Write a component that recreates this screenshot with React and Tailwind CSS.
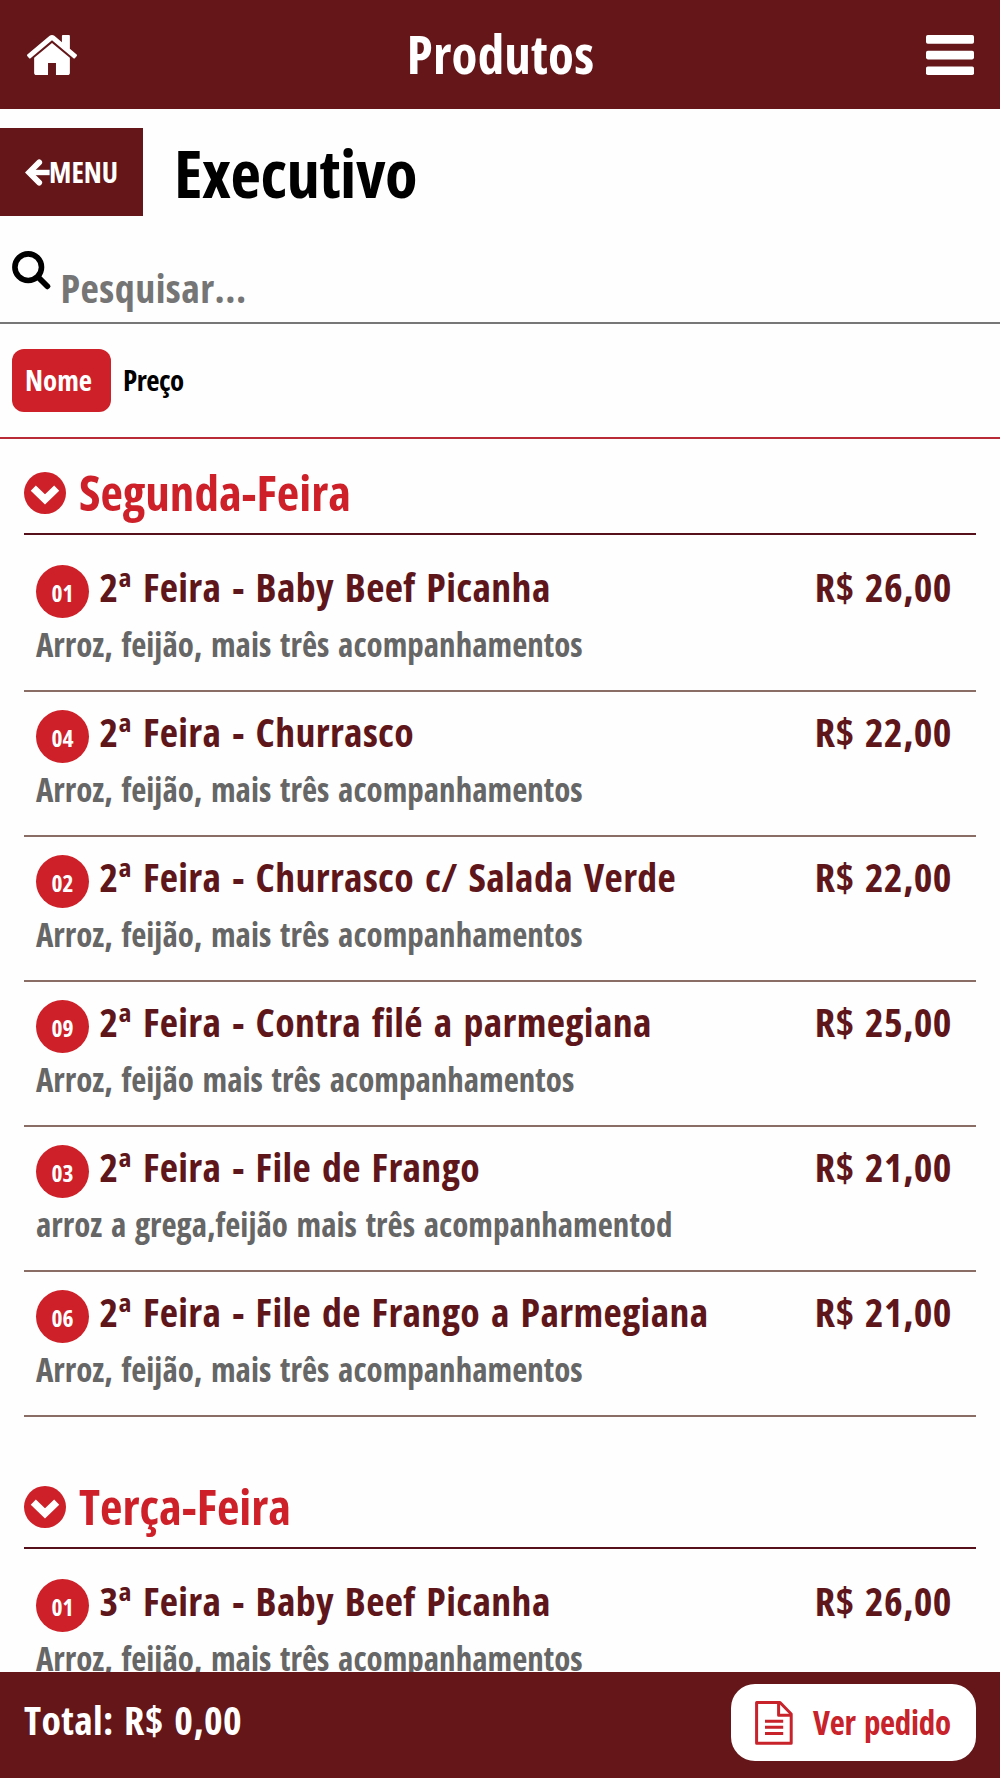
import React from 'react';

const rice = 'Arroz, feijão, mais três acompanhamentos';

const sections = [
  {
    title: 'Segunda-Feira',
    items: [
      { code: '01', name: '2ª Feira - Baby Beef Picanha', price: 'R$ 26,00', desc: rice },
      { code: '04', name: '2ª Feira - Churrasco', price: 'R$ 22,00', desc: rice },
      { code: '02', name: '2ª Feira - Churrasco c/ Salada Verde', price: 'R$ 22,00', desc: rice },
      { code: '09', name: '2ª Feira - Contra filé a parmegiana', price: 'R$ 25,00', desc: 'Arroz, feijão mais três acompanhamentos' },
      { code: '03', name: '2ª Feira - File de Frango', price: 'R$ 21,00', desc: 'arroz a grega,feijão mais três acompanhamentod' },
      { code: '06', name: '2ª Feira - File de Frango a Parmegiana', price: 'R$ 21,00', desc: rice },
    ],
  },
  {
    title: 'Terça-Feira',
    items: [{ code: '01', name: '3ª Feira - Baby Beef Picanha', price: 'R$ 26,00', desc: rice }],
  },
];

function HomeIcon() {
  return (
    <svg className="h-10 w-[50px]" viewBox="26 253 1612 1283" preserveAspectRatio="none" fill="currentColor">
      <path d="M1408 992v480q0 26-19 45t-45 19H960v-384H704v384H320q-26 0-45-19t-19-45V992q0-1 .5-3t.5-3l575-474 575 474q1 2 1 6zm223-69l-62 74q-8 9-21 11h-3q-13 0-21-7L832 424l-692 577q-12 8-24 7-13-2-21-11l-62-74q-8-10-7-23.5T37 878l719-599q32-26 76-26t76 26l244 204V288q0-14 9-23t23-9h192q14 0 23 9t9 23v408l219 182q10 8 11 21.5t-7 23.5z" />
    </svg>
  );
}

function BarsIcon() {
  return (
    <svg className="h-10 w-12" viewBox="0 0 48 40" fill="currentColor">
      <rect y="0" width="48" height="8.8" rx="1.8" />
      <rect y="15.8" width="48" height="8.6" rx="1.8" />
      <rect y="31.4" width="48" height="8.6" rx="1.8" />
    </svg>
  );
}

function ArrowIcon() {
  return (
    <svg className="h-[27px] w-[25px] shrink-0" viewBox="0 0 25 27" fill="none" stroke="currentColor">
      <path d="M14.2 3.4L4 13.5L14.2 23.6" strokeWidth="5.8" strokeLinecap="round" />
      <path d="M4 13.5H24.6" strokeWidth="5.4" />
    </svg>
  );
}

function SearchIcon() {
  return (
    <svg className="h-[39px] w-[39px] shrink-0" viewBox="0 0 39 39" fill="none" stroke="currentColor">
      <circle cx="16.2" cy="16.2" r="13.3" strokeWidth="5.6" />
      <path d="M26.5 26.5L35.3 35.3" strokeWidth="5.8" strokeLinecap="round" />
    </svg>
  );
}

function ChevronCircle() {
  return (
    <svg className="h-[42px] w-[42px] shrink-0" viewBox="0 0 42 42">
      <circle cx="21" cy="21" r="21" fill="#cd2028" />
      <path d="M9.3 16.2L21 27.4L32.7 16.2" fill="none" stroke="#fff" strokeWidth="7.4" strokeLinejoin="miter" />
    </svg>
  );
}

function DocIcon() {
  return (
    <svg className="mt-px h-11 w-[38px] shrink-0" viewBox="0 0 38 44" fill="none" stroke="currentColor" strokeWidth="3" strokeLinejoin="round">
      <path d="M1.6 1.5H25L36.2 13V42.3H1.6Z" />
      <path d="M23.6 1.5V14.3H36.2" />
      <path d="M10 20.3H28.2M10 26.3H28.2M10 32.4H28.2" />
    </svg>
  );
}

function Item({ code, name, price, desc }) {
  return (
    <li className="h-[145px] border-b-2 border-[#8a6e66] pt-[17px] pr-6 pl-3">
      <div className="flex h-[54px] items-start">
        <span className="mt-[0.5px] flex h-[53px] w-[53px] shrink-0 items-center justify-center rounded-full bg-[#cd2028] pt-[5px] text-[23.5px] leading-none text-white">
          {code}
        </span>
        <span className="ml-[10.5px] text-[39.8px] leading-[46px] tracking-[0.35px] text-[#5f161b] [word-spacing:3.4px]">{name}</span>
        <span className="ml-auto text-[39.8px] leading-[46px] tracking-[0.45px] text-[#5f161b] [word-spacing:2.6px]">{price}</span>
      </div>
      <p className="text-[33px] leading-[54px] text-[#666] [word-spacing:2.8px]">{desc}</p>
    </li>
  );
}

export default function App() {
  return (
    <div className="flex h-[1778px] w-[1000px] flex-col overflow-hidden bg-[#fefefe] font-['Open_Sans','Noto_Sans',sans-serif] font-bold whitespace-nowrap text-black [font-stretch:75%]">
      <header className="grid h-[109px] shrink-0 grid-cols-3 items-center bg-[#641619] pt-px pr-[26px] pl-[27px] text-white">
        <HomeIcon />
        <h1 className="-mt-1 text-center text-[53px] leading-none tracking-[0.2px]">Produtos</h1>
        <div className="flex justify-end">
          <BarsIcon />
        </div>
      </header>

      <div className="mt-[19px] flex h-[88px] shrink-0 items-center">
        <button className="flex h-full w-[142.5px] items-center bg-[#641619] pl-[25px] text-[29px] leading-none text-white">
          <ArrowIcon />
          <span className="-mt-0.5 -ml-px">MENU</span>
        </button>
        <h2 className="mt-0.5 ml-[31.5px] text-[66.7px] leading-none tracking-[-0.5px]">Executivo</h2>
      </div>

      <div className="flex h-[108px] shrink-0 items-start border-b-2 border-[#777] pt-[35px] pl-3">
        <SearchIcon />
        <input
          placeholder="Pesquisar..."
          className="mt-[11px] ml-[9.5px] h-[52px] flex-1 text-[40px] leading-[52px] tracking-[0.45px] outline-none placeholder:text-[#757575] placeholder:opacity-100"
        />
      </div>

      <div className="flex h-[115px] shrink-0 items-start border-b-2 border-[#b92c37] pt-[25px] pl-3 text-[29px]">
        <span className="h-[63px] w-[99px] rounded-[12px] bg-[#cd2028] pl-[13px] leading-[62px] text-white">Nome</span>
        <span className="pl-3 leading-[62px] tracking-[-0.5px]">Preço</span>
      </div>

      <main className="min-h-0 flex-1 overflow-hidden px-6">
        {sections.map((s) => (
          <section key={s.title} className="mb-[36px]">
            <h3 className="flex h-[96px] items-center gap-[13px] border-b-2 border-[#561019] pt-[14px] text-[49px] leading-[60px] text-[#cd2028]">
              <ChevronCircle />
              <span className="-mt-0.5">{s.title}</span>
            </h3>
            <ul className="pt-3">
              {s.items.map((it) => (
                <Item key={it.code} {...it} />
              ))}
            </ul>
          </section>
        ))}
      </main>

      <footer className="flex h-[106px] shrink-0 items-start justify-between bg-[#641619] px-6 pt-3 text-white">
        <span className="text-[39.8px] leading-[72px] tracking-[0.35px] [word-spacing:3px]">Total: R$ 0,00</span>
        <button className="flex h-[77px] w-[245px] items-center rounded-[24px] bg-white pl-6 text-[33px] text-[#c8222b]">
          <DocIcon />
          <span className="ml-[20px] tracking-[-0.3px] [word-spacing:2.7px]">Ver pedido</span>
        </button>
      </footer>
    </div>
  );
}
